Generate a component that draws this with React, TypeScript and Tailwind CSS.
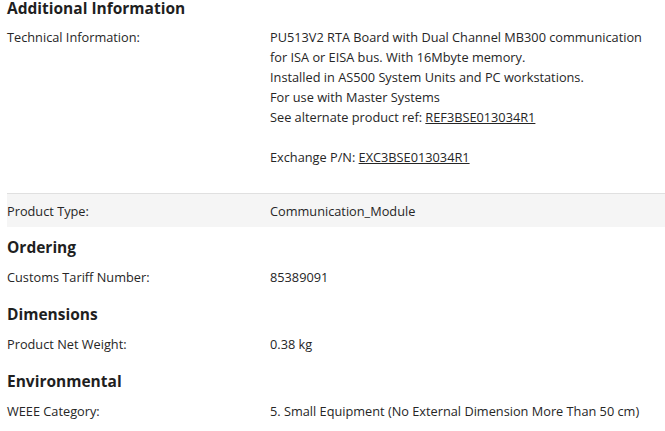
const rows = {
  ordering: [{ label: 'Customs Tariff Number:', value: '85389091' }],
  dimensions: [{ label: 'Product Net Weight:', value: '0.38 kg' }],
  environmental: [{ label: 'WEEE Category:', value: '5. Small Equipment (No External Dimension More Than 50 cm)' }],
}

function Heading({ children }: { children: React.ReactNode }) {
  return <h2 className="pt-[10px] pb-[3px] text-[15.5px] leading-[20px] font-bold text-[#1f1f1f]">{children}</h2>
}

function Row({ label, value, shaded }: { label: string; value: React.ReactNode; shaded?: boolean }) {
  return (
    <div className={`grid grid-cols-[263px_1fr] h-[34px] items-center ${shaded ? 'bg-[#f5f5f5] border-t border-[#e0e0e0]' : ''}`}>
      <div>{label}</div>
      <div>{value}</div>
    </div>
  )
}

export default function App() {
  return (
    <div className="w-[665px] h-[431px] overflow-hidden bg-white pl-[7px] text-[12.75px] leading-[20px] text-[#262626] font-['Open_Sans',sans-serif]">
      <h2 className="mt-[-2px] text-[15.5px] leading-[20px] font-bold text-[#1f1f1f]">Additional Information</h2>

      <div className="grid grid-cols-[263px_1fr] pt-[9px] pb-[26px]">
        <div>Technical Information:</div>
        <div>
          <div>PU513V2 RTA Board with Dual Channel MB300 communication</div>
          <div>for ISA or EISA bus. With 16Mbyte memory.</div>
          <div>Installed in AS500 System Units and PC workstations.</div>
          <div>For use with Master Systems</div>
          <div>
            See alternate product ref: <a href="#" className="underline">REF3BSE013034R1</a>
          </div>
          <div className="h-[20px]" />
          <div>
            Exchange P/N: <a href="#" className="underline">EXC3BSE013034R1</a>
          </div>
        </div>
      </div>

      <Row label="Product Type:" value="Communication_Module" shaded />

      <Heading>Ordering</Heading>
      {rows.ordering.map(r => <Row key={r.label} {...r} />)}

      <Heading>Dimensions</Heading>
      {rows.dimensions.map(r => <Row key={r.label} {...r} />)}

      <Heading>Environmental</Heading>
      {rows.environmental.map(r => <Row key={r.label} {...r} />)}
    </div>
  )
}
